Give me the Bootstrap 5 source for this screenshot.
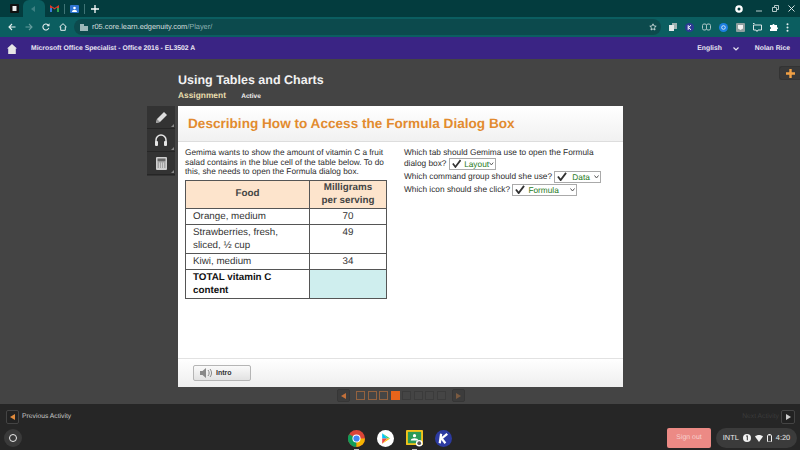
<!DOCTYPE html>
<html lang="en">
<head>
    <meta charset="UTF-8">
    <title>Using Tables and Charts</title>
    <link href="https://cdn.jsdelivr.net/npm/bootstrap@5.3.2/dist/css/bootstrap.min.css" rel="stylesheet">
    <style>
        html, body { height: 450px; overflow: hidden; }
        body { width: 800px; background: #262626; font-family: "Liberation Sans", Arial, sans-serif; font-size: 8.25px; color: #2e2e2e; line-height: 9.7px; text-rendering: geometricPrecision; }

        /* browser chrome */
        .tab-strip { height: 17px; background: #033c3e; }
        .tab-first { width: 23px; padding-left: 10px; }
        .tab-active { width: 22px; height: 17px; background: #0b5e60; border-radius: 6px 6px 0 0; }
        .tab-gmail { margin-left: 5px; }
        .tab-sep { width: 1px; height: 10px; background: #3f7475; margin: 0 5px; }
        .tab-plus { margin-left: 1px; }
        .win-btns { gap: 9px; padding-right: 5px; }
        .win-min { margin-left: 4px; }
        .tool-strip { height: 20px; background: #0b5e60; padding: 0 6px 0 8px; gap: 9px; }
        .omnibox { width: 587px; height: 16px; margin-left: -2px; border-radius: 8px; background: #0c4a4d; color: #d3dfdf; font-size: 7.4px; padding-left: 6px; }
        .omnibox em { font-style: normal; color: #8fb3b3; }
        .ext-icons { gap: 8px; margin-left: -1px; }

        /* site bar */
        .site-bar { height: 22px; padding-top: 1px; background: #3a2484; color: #e8e4f2; font-size: 6.8px; font-weight: 700; }
        .home-btn { margin-left: 7px; }
        .site-title { margin-left: 14px; }
        .site-lang { margin-right: 11px; }
        .site-user { margin: 0 10px 0 16px; }

        /* player */
        .player { height: 345px; background: #444; position: relative; }
        .player-inner { width: 445px; margin-left: 178px; }
        .head-block { height: 47px; padding-top: 13px; color: #f2f2f2; }
        .head-title { font-size: 12.5px; font-weight: 700; line-height: 17px; margin: 0; }
        .head-sub { font-size: 8.4px; font-weight: 700; color: #e9dfae; line-height: 11px; margin-top: 1px; }
        .head-sub span { font-size: 6.5px; color: #f0f0f0; margin-left: 13px; }
        .add-tab { position: absolute; right: 0; top: 7px; width: 21px; height: 14px; background: #393939; border: 1px solid #333; border-right: 0; border-radius: 3px 0 0 3px; }
        .tool-rail { position: absolute; left: 147px; top: 47px; width: 28px; height: 70px; background: #333; }
        .tool-cell { height: 23px; position: relative; border-bottom: 1px solid #262626; }
        .tool-cell::after { content: ""; position: absolute; right: 1px; bottom: 1px; border-style: solid; border-width: 0 0 3px 3px; border-color: transparent transparent #888 transparent; }
        .sheet { height: 281px; background: #fff; }
        .sheet-head { height: 36px; background: linear-gradient(#fff, #f1f1f1); border-bottom: 1px solid #ddd; padding-left: 10px; color: #e28b2f; font-size: 13.6px; font-weight: 700; }
        .sheet-body { height: 216px; padding: 6px 0 0 7px; }
        .col-left { width: 201px; }
        .col-right { width: 200px; margin-left: 18px; font-size: 8.3px; }
        .food-table { width: 201px; margin-top: 3px; border-collapse: collapse; font-size: 9.8px; line-height: 12.3px; table-layout: fixed; color: #333; }
        .food-col { width: 124px; }
        .mg-col { width: 77px; }
        .food-table th, .food-table td { border: 1px solid #555; padding: 2px 4px 1px 7px; font-weight: 400; background: #fff; color: #333; }
        .food-table th { background: #fde4cc; font-weight: 700; text-align: center; vertical-align: middle; height: 28px; color: #444; padding: 1px; }
        .food-table .num { text-align: center; vertical-align: top; padding-left: 4px; }
        .food-table .total { font-weight: 700; color: #111; height: 28px; }
        .food-table .blank { background: #cfeeee; }
        .answer { display: inline-flex; align-items: center; height: 12px; border: 1px solid #aaa; background: #fff; color: #1f7a23; padding: 0 1px 0 2px; vertical-align: middle; line-height: 10px; }
        .answer-layout { width: 47px; }
        .answer-data { width: 47px; }
        .answer-formula { width: 65px; }
        .answer svg:first-child { margin-right: 3px; }
        .answer-data svg:first-child { margin-right: 5px; }
        .answer svg:last-child { margin-left: auto; }
        .q-line { margin-bottom: 1px; }
        .sheet-foot { height: 29px; background: linear-gradient(#fff, #eee); border-top: 1px solid #e2e2e2; padding-left: 15px; }
        .intro-btn { width: 58px; height: 16px; border: 1px solid #b5b5b5; border-radius: 2px; background: linear-gradient(#fafafa, #e2e2e2); color: #333; font-size: 7px; font-weight: 700; padding: 0 0 0 6px; gap: 4px; }
        .pager { height: 17px; margin-left: 159px; gap: 2.5px; }
        .pg-box { box-sizing: content-box; width: 7px; height: 7px; border: 1px solid #3b3b3b; background: #454545; }
        .pg-done { border-color: #94623f; }
        .pg-now { background: #e8641a; border-color: #e8641a; }
        .pg-arrow { width: 13px; height: 13px; background: #3c3c3c; border: 1px solid #363636; border-radius: 2px; }
        .pg-gap-l { margin-right: 3.5px; }
        .pg-gap-r { margin-left: 3.5px; }

        /* bottom */
        .activity-bar { height: 24px; padding: 1px 5px 0 6px; color: #c6c6c6; font-size: 6.75px; }
        .nav-square { width: 14px; height: 14px; background: #222; border: 1px solid #444; border-radius: 2px; }
        .prev-square { width: 13px; margin-right: 3px; }
        .next-label { color: #3b3b3b; margin-right: 2px; }
        .shelf { height: 20px; padding: 0 3px 0 4px; }
        .launcher { width: 18px; height: 18px; border-radius: 50%; background: #3a3a3a; }
        .launcher i { display: block; width: 8px; height: 8px; border-radius: 50%; border: 1px solid #eee; }
        .app-row { margin-left: 326px; gap: 12px; }
        .app-open { position: relative; }
        .app-open::after { content: ""; position: absolute; left: 6px; bottom: -3px; width: 5px; height: 1px; background: #bbb; }
        .signout { width: 44px; height: 20px; margin-left: 215px; background: #ec8a85; border-radius: 2px; color: #f8d2cf; font-size: 6.9px; }
        .tray { width: 81px; height: 20px; margin-left: 5px; border-radius: 10px; background: #3b3b3b; color: #e8e8e8; font-size: 7.4px; gap: 4px; }
    </style>
</head>
<body>

    <!-- Browser tabs -->
    <div class="tab-strip d-flex align-items-center">
        <div class="tab-first d-flex align-items-center">
            <svg width="9" height="9" viewBox="0 0 9 9"><rect width="9" height="9" rx="1" fill="#111"/><rect x="2.500" y="2" width="4" height="5" fill="#eee"/></svg>
        </div>
        <div class="tab-active d-flex align-items-center justify-content-center">
            <svg width="6" height="6" viewBox="0 0 6 6"><path d="M0 3 4 0v6z" fill="#3d8082"/></svg>
        </div>
        <svg class="tab-gmail" width="9" height="7" viewBox="0 0 9 7"><path d="M0 0v7h2V2.500L4.500 4.500 7 2.500V7h2V0L4.500 3z" fill="#d93a2b"/><rect y="3" width="2" height="4" fill="#3a7bd8"/><rect x="7" y="3" width="2" height="4" fill="#2fa24f"/></svg>
        <div class="tab-sep"></div>
        <svg width="9" height="8" viewBox="0 0 9 8"><rect width="9" height="8" rx="1" fill="#2f74cf"/><circle cx="4.500" cy="3" r="1.300" fill="#fff"/><path d="M2 7c0-3 5-3 5 0z" fill="#fff"/></svg>
        <div class="tab-sep"></div>
        <svg class="tab-plus" width="8" height="8" viewBox="0 0 8 8"><path d="M4 0v8M0 4h8" stroke="#fff" stroke-width="1.300"/></svg>
        <div class="ms-auto d-flex align-items-center win-btns">
            <svg width="8" height="8" viewBox="0 0 8 8"><circle cx="4" cy="4" r="3.800" fill="#fff"/><circle cx="4" cy="4" r="1.500" fill="#033c3e"/></svg>
            <svg class="win-min" width="7" height="7" viewBox="0 0 7 7"><path d="M0 6h6" stroke="#b9cccc"/></svg>
            <svg width="7" height="7" viewBox="0 0 7 7"><path d="M.5 2.500h4v4h-4zM2.500 2V.5h4v4H5" fill="none" stroke="#c6d6d6" stroke-width=".9"/></svg>
            <svg width="7" height="7" viewBox="0 0 7 7"><path d="M.5.5l6 6M6.500.5l-6 6" stroke="#d5e2e2"/></svg>
        </div>
    </div>

    <!-- Browser toolbar -->
    <div class="tool-strip d-flex align-items-center">
        <svg width="8" height="8" viewBox="0 0 8 8"><path d="M7.500 4H1M4 1 1 4l3 3" fill="none" stroke="#e6efef" stroke-width="1.100"/></svg>
        <svg width="8" height="8" viewBox="0 0 8 8"><path d="M.5 4H7M4 1l3 3-3 3" fill="none" stroke="#659c9d" stroke-width="1.100"/></svg>
        <svg width="8" height="8" viewBox="0 0 8 8"><path d="M6.800 4.800A3 3 0 1 1 6 1.800" fill="none" stroke="#e6efef" stroke-width="1.100"/><path d="M7.500.3v3h-3z" fill="#e6efef"/></svg>
        <svg width="8" height="8" viewBox="0 0 8 8"><path d="M4 .7.7 3.800h1v3.500h4.600V3.800h1z" fill="none" stroke="#e6efef" stroke-width="1"/></svg>
        <div class="omnibox d-flex align-items-center">
            <svg class="me-1" width="8" height="7" viewBox="0 0 8 7"><path d="M0 0h4v2h4v5H0z" fill="#9db9ba"/></svg>
            <span>r05.core.learn.edgenuity.com<em>/Player/</em></span>
            <svg class="ms-auto me-1" width="8" height="8" viewBox="0 0 10 10"><path d="M5 1l1.200 2.700 2.800.3-2.100 1.900.6 2.900L5 7.300 2.500 8.800l.6-2.900L1 4l2.800-.3z" fill="none" stroke="#dfe9e9" stroke-width="1"/></svg>
        </div>
        <div class="d-flex align-items-center ext-icons">
            <svg width="8" height="8" viewBox="0 0 8 8"><rect x="3" y="0" width="5" height="6" fill="#9fb3b3"/><rect x="0" y="2" width="5" height="6" fill="#e3e9e9"/></svg>
            <svg width="9" height="9" viewBox="0 0 9 9"><circle cx="4.500" cy="4.500" r="4.500" fill="#2c3a94"/><path d="M3.200 2.200v4.600M6 2.200 3.600 4.500 6 6.800" fill="none" stroke="#fff"/></svg>
            <svg width="9" height="8" viewBox="0 0 9 8"><rect x=".5" y="1" width="4" height="6" rx="1.500" fill="none" stroke="#a9c4c4"/><rect x="4.500" y="1" width="4" height="6" rx="1.500" fill="none" stroke="#a9c4c4"/></svg>
            <svg width="9" height="9" viewBox="0 0 9 9"><circle cx="4.500" cy="4.500" r="4.500" fill="#1c7fe0"/><circle cx="4.500" cy="4.500" r="1.800" fill="none" stroke="#cfe3f7"/></svg>
            <svg width="9" height="9" viewBox="0 0 9 9"><rect width="9" height="9" rx="1" fill="#8f9f9f"/><path d="M2 2h5v3.500L4.500 7 2 5.500z" fill="#f3f3f3"/></svg>
            <svg width="9" height="9" viewBox="0 0 9 9"><path d="M.5 2h8v5H5L4 8.500 3 7H.5zM1.500.5H0" fill="none" stroke="#dbe6e6"/></svg>
            <svg width="8" height="8" viewBox="0 0 8 8"><path d="M0 2h2.500a1 1 0 0 1 2 0H7v2.300a1 1 0 0 1 0 2V8H0V6a1 1 0 0 0 0-2z" fill="#fff"/></svg>
            <svg width="3" height="9" viewBox="0 0 3 9"><circle cx="1.500" cy="1.200" r="1" fill="#e6efef"/><circle cx="1.500" cy="4.500" r="1" fill="#e6efef"/><circle cx="1.500" cy="7.800" r="1" fill="#e6efef"/></svg>
        </div>
    </div>

    <!-- Course bar -->
    <div class="site-bar d-flex align-items-center">
        <svg class="home-btn" width="10" height="10" viewBox="0 0 10 10"><path d="M5 0 0 4.500h1.200V10h7.600V4.500H10z" fill="#e6e6e6"/></svg>
        <span class="site-title">Microsoft Office Specialist - Office 2016 - EL3502 A</span>
        <span class="ms-auto site-lang">English</span>
        <svg width="6" height="4" viewBox="0 0 6 4"><path d="M.5.500 3 3 5.500.5" fill="none" stroke="#e8e4f2" stroke-width="1.200"/></svg>
        <span class="site-user">Nolan Rice</span>
    </div>

    <!-- Player -->
    <div class="player">
        <div class="add-tab d-flex align-items-center justify-content-center">
            <svg width="9" height="9" viewBox="0 0 9 9"><path d="M4.500 0v9M0 4.500h9" stroke="#f0a045" stroke-width="2.400"/></svg>
        </div>
        <div class="tool-rail">
            <div class="tool-cell d-flex align-items-center justify-content-center">
                <svg width="13" height="13" viewBox="0 0 13 13"><path d="M1 12l1-4 7-7 3 3-7 7z" fill="#ddd"/><path d="M1 12l1-4 3 3z" fill="#999"/></svg>
            </div>
            <div class="tool-cell d-flex align-items-center justify-content-center">
                <svg width="14" height="12" viewBox="0 0 14 12"><path d="M2 8V6a5 5 0 0 1 10 0v2" fill="none" stroke="#e6e6e6" stroke-width="1.500"/><rect x="1" y="7" width="3" height="5" rx="1" fill="#e6e6e6"/><rect x="10" y="7" width="3" height="5" rx="1" fill="#e6e6e6"/></svg>
            </div>
            <div class="tool-cell d-flex align-items-center justify-content-center">
                <svg width="11" height="13" viewBox="0 0 11 13"><rect width="11" height="13" rx="1" fill="#cfcfcf"/><rect x="1.500" y="1.500" width="8" height="3" fill="#666"/><path d="M1.500 6h8M1.500 8h8M1.500 10h8" stroke="#777"/><path d="M3.500 5.500v6M5.500 5.500v6M7.500 5.500v6" stroke="#cfcfcf"/></svg>
            </div>
        </div>

        <div class="player-inner">
            <div class="head-block">
                <h1 class="head-title">Using Tables and Charts</h1>
                <div class="head-sub">Assignment <span>Active</span></div>
            </div>

            <div class="sheet">
                <div class="sheet-head d-flex align-items-center">Describing How to Access the Formula Dialog Box</div>
                <div class="sheet-body d-flex">
                    <div class="col-left">
                        Gemima wants to show the amount of vitamin C a fruit salad contains in the blue cell of the table below. To do this, she needs to open the Formula dialog box.
                        <table class="food-table">
                            <colgroup><col class="food-col"><col class="mg-col"></colgroup>
                            <tr><th>Food</th><th>Milligrams<br>per serving</th></tr>
                            <tr><td>Orange, medium</td><td class="num">70</td></tr>
                            <tr><td>Strawberries, fresh, sliced, ½ cup</td><td class="num">49</td></tr>
                            <tr><td>Kiwi, medium</td><td class="num">34</td></tr>
                            <tr><td class="total">TOTAL vitamin C content</td><td class="blank"></td></tr>
                        </table>
                    </div>
                    <div class="col-right">
                        <div>Which tab should Gemima use to open the Formula</div>
                        <div class="q-line">dialog box?
                            <span class="answer answer-layout">
                                <svg width="10" height="9" viewBox="0 0 11 10"><path d="M1 5l3 4 6-8" fill="none" stroke="#333" stroke-width="2"/></svg>
                                Layout
                                <svg width="5" height="4" viewBox="0 0 5 4"><path d="M.5.500 2.500 3 4.500.5" fill="none" stroke="#555"/></svg>
                            </span>
                        </div>
                        <div class="q-line">Which command group should she use?
                            <span class="answer answer-data">
                                <svg width="10" height="9" viewBox="0 0 11 10"><path d="M1 5l3 4 6-8" fill="none" stroke="#333" stroke-width="2"/></svg>
                                Data
                                <svg width="5" height="4" viewBox="0 0 5 4"><path d="M.5.500 2.500 3 4.500.5" fill="none" stroke="#555"/></svg>
                            </span>
                        </div>
                        <div class="q-line">Which icon should she click?
                            <span class="answer answer-formula">
                                <svg width="10" height="9" viewBox="0 0 11 10"><path d="M1 5l3 4 6-8" fill="none" stroke="#333" stroke-width="2"/></svg>
                                Formula
                                <svg width="5" height="4" viewBox="0 0 5 4"><path d="M.5.500 2.500 3 4.500.5" fill="none" stroke="#555"/></svg>
                            </span>
                        </div>
                    </div>
                </div>
                <div class="sheet-foot d-flex align-items-center">
                    <button type="button" class="intro-btn d-flex align-items-center">
                        <svg width="12" height="10" viewBox="0 0 12 10"><path d="M0 3h2.500L6 0v10L2.500 7H0z" fill="#888"/><path d="M8 2c1.500 2 1.500 4 0 6M10 1c2 2.500 2 5.500 0 8" fill="none" stroke="#888"/></svg>
                        Intro
                    </button>
                </div>
            </div>

            <div class="pager d-flex align-items-center">
                <div class="pg-arrow pg-gap-l d-flex align-items-center justify-content-center"><svg width="5" height="6" viewBox="0 0 5 6"><path d="M0 3 5 0v6z" fill="#c2703a"/></svg></div>
                <div class="pg-box pg-done"></div>
                <div class="pg-box pg-done"></div>
                <div class="pg-box pg-done"></div>
                <div class="pg-box pg-now"></div>
                <div class="pg-box"></div>
                <div class="pg-box"></div>
                <div class="pg-box"></div>
                <div class="pg-box"></div>
                <div class="pg-arrow pg-gap-r d-flex align-items-center justify-content-center"><svg width="5" height="6" viewBox="0 0 5 6"><path d="M5 3 0 0v6z" fill="#7a5a40"/></svg></div>
            </div>
        </div>
    </div>

    <!-- Previous / next activity -->
    <div class="activity-bar d-flex align-items-center">
        <div class="nav-square prev-square d-flex align-items-center justify-content-center"><svg width="5" height="6" viewBox="0 0 5 6"><path d="M0 3 5 0v6z" fill="#e08a3c"/></svg></div>
        <span>Previous Activity</span>
        <span class="ms-auto next-label">Next Activity</span>
        <div class="nav-square d-flex align-items-center justify-content-center"><svg width="5" height="6" viewBox="0 0 5 6"><path d="M5 3 0 0v6z" fill="#ccc"/></svg></div>
    </div>

    <!-- Chrome OS shelf -->
    <div class="shelf d-flex align-items-center">
        <div class="launcher d-flex align-items-center justify-content-center"><i></i></div>
        <div class="app-row d-flex align-items-center">
            <div class="app-open d-flex"><svg width="17" height="17" viewBox="0 0 18 18"><circle cx="9" cy="9" r="9" fill="#db4437"/><path d="M9 9 1.200 4.500A9 9 0 0 0 9 18z" fill="#0f9d58"/><path d="M9 9h9a9 9 0 0 1-9 9z" fill="#f4b400"/><circle cx="9" cy="9" r="4.300" fill="#fff"/><circle cx="9" cy="9" r="3.300" fill="#4285f4"/></svg></div>
            <svg width="17" height="17" viewBox="0 0 18 18"><circle cx="9" cy="9" r="9" fill="#fff"/><path d="M5.500 3.500v5.500h5.500z" fill="#00c3ff"/><path d="M5.500 14.500V9h5.500z" fill="#ef4a4a"/><path d="M5.500 3.500 14 9h-3z" fill="#29d17a"/><path d="M5.500 14.500 14 9h-3z" fill="#ffc400"/></svg>
            <div class="app-open d-flex"><svg width="17" height="17" viewBox="0 0 18 18"><rect width="18" height="16" rx="1" fill="#f2c21b"/><rect x="2" y="2" width="14" height="12" fill="#2a9a57"/><circle cx="9" cy="6" r="1.700" fill="#fff"/><path d="M5 11c0-3 8-3 8 0z" fill="#fff"/><circle cx="14" cy="14" r="3.500" fill="#fff"/><circle cx="14" cy="14" r="2" fill="#555"/></svg></div>
            <svg width="17" height="17" viewBox="0 0 18 18"><circle cx="9" cy="9" r="9" fill="#2c3aa0"/><path d="M6.500 4 5 14M13 4 7 9l4 5" fill="none" stroke="#fff" stroke-width="2.400"/></svg>
        </div>
        <div class="signout d-flex align-items-center justify-content-center">Sign out</div>
        <div class="tray d-flex align-items-center justify-content-center">
            <span>INTL</span>
            <svg width="8" height="8" viewBox="0 0 8 8"><circle cx="4" cy="4" r="4" fill="#f2f2f2"/><path d="M3.200 2.200 4.300 1.700V6.300" fill="none" stroke="#333"/></svg>
            <svg width="8" height="7" viewBox="0 0 8 7"><path d="M0 1.500C2-.5 6-.5 8 1.500L4 7z" fill="#f2f2f2"/></svg>
            <svg width="5" height="8" viewBox="0 0 5 8"><rect x=".5" y="1" width="4" height="7" rx=".7" fill="none" stroke="#f2f2f2"/><rect x="1.500" y="0" width="2" height="1" fill="#f2f2f2"/></svg>
            <span>4:20</span>
        </div>
    </div>

    <script src="https://cdn.jsdelivr.net/npm/bootstrap@5.3.2/dist/js/bootstrap.bundle.min.js"></script>
</body>
</html>
